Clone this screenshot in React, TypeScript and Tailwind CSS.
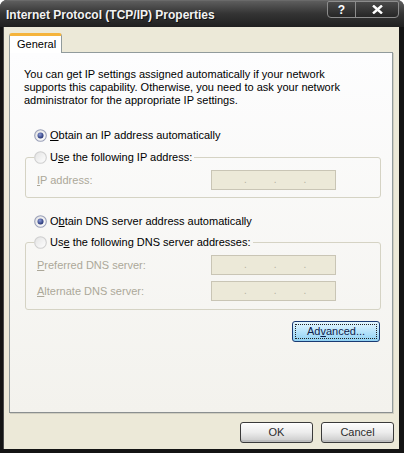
import React, { useId } from 'react';

const disabledText = 'text-[#ACA899]';

function Radio({ checked }: { checked?: boolean }) {
  const id = useId().replace(/:/g, '');
  return (
    <svg width="13" height="13" viewBox="0 0 13 13" className="shrink-0">
      <defs>
        <linearGradient id={`f${id}`} x1="0" y1="0" x2="1" y2="1">
          <stop offset="0" stopColor="#e2e2e2" />
          <stop offset="1" stopColor="#ffffff" />
        </linearGradient>
        <radialGradient id={`d${id}`} cx="0.4" cy="0.35" r="0.7">
          <stop offset="0" stopColor="#8a9ad8" />
          <stop offset="1" stopColor="#1c2a6a" />
        </radialGradient>
      </defs>
      <circle
        cx="6.5"
        cy="6.5"
        r="5.8"
        fill={`url(#f${id})`}
        stroke={checked ? '#9aa0b8' : '#cfcfcf'}
        strokeWidth="1.1"
      />
      {checked && <circle cx="6.5" cy="6.5" r="3" fill={`url(#d${id})`} />}
    </svg>
  );
}

function IpBox() {
  return (
    <div className="flex h-[20px] w-[125px] items-center gap-[27px] border border-[#C9C5B5] bg-[#ECE9D8] pb-[2px] pl-[32px] text-[10px] text-[#B5B1A2]">
      <span>.</span>
      <span>.</span>
      <span>.</span>
    </div>
  );
}

function FieldRow({ children }: { children: React.ReactNode }) {
  return (
    <div className="flex h-[20px] items-center pl-[11px]">
      <span className={`w-[174px] ${disabledText}`}>{children}</span>
      <IpBox />
    </div>
  );
}

function RadioRow({ checked, children }: { checked?: boolean; children: React.ReactNode }) {
  return (
    <div className="flex h-[16px] items-center gap-[3px] text-black">
      <Radio checked={checked} />
      <span className="pr-[2px]">{children}</span>
    </div>
  );
}

function XpButton({ children, focused }: { children: React.ReactNode; focused?: boolean }) {
  if (focused) {
    return (
      <button
        type="button"
        className="flex h-[21px] w-[88px] items-center justify-center rounded-[3px] border border-[#1a3a72] bg-gradient-to-b from-[#e4f6ff] via-[#b8e4fb] to-[#8fd0f2] p-[2px]"
      >
        <span className="flex h-full w-full items-center justify-center border border-dotted border-[#222] text-[#10204a]">
          {children}
        </span>
      </button>
    );
  }
  return (
    <button
      type="button"
      className="flex h-[21px] w-[73px] items-center justify-center rounded-[3px] border border-[#3a3a3a] bg-gradient-to-b from-[#fdfdfd] via-[#ececec] to-[#c9c9c9] text-[#2c2c2c] shadow-[inset_0_-2px_0_#bdbdbd,inset_0_1px_0_#ffffff]"
    >
      {children}
    </button>
  );
}

function TitleBar() {
  return (
    <div className="flex h-[27px] shrink-0 items-start justify-between rounded-t-[7px] border-t border-[#6a6a6a] bg-gradient-to-b from-[#5e5e5e] via-[#333333] to-[#202020]">
      <span className="pl-[6px] pt-[7px] font-['Liberation_Sans',Arial,sans-serif] text-[12px] font-bold leading-[14px] text-[#f2f2f2] [text-shadow:1px_1px_0_#111]">
        Internet Protocol (TCP/IP) Properties
      </span>
      <div className="mr-[5px] flex h-[17px] overflow-hidden rounded-b-[4px] rounded-t-[2px] border border-[#8c8c8c] bg-gradient-to-b from-[#4a4a4a] to-[#262626]">
        <div className="flex w-[28px] items-center justify-center border-r border-[#8c8c8c] text-[12px] font-bold leading-none text-white">
          ?
        </div>
        <div className="flex w-[42px] items-center justify-center">
          <svg width="11" height="9" viewBox="0 0 11 9">
            <path d="M1 0.5 L10 8.5 M10 0.5 L1 8.5" stroke="#fff" strokeWidth="2.4" />
          </svg>
        </div>
      </div>
    </div>
  );
}

export default function App() {
  return (
    <div className="h-[453px] w-[404px] bg-white font-['Liberation_Sans',Arial,sans-serif] text-[11px] leading-[13px]">
      <div className="flex h-full flex-col rounded-t-[7px] bg-[#141414]">
        <TitleBar />
        <div className="mb-[4px] ml-[3px] mr-[5px] flex flex-1 flex-col border-l border-[#4a4a4a] bg-[#ECE9D8] px-[5px] pt-[6px]">
          {/* tab strip */}
          <div className="relative z-10 -mb-px flex">
            <div className="flex h-[20px] w-[53px] items-center rounded-t-[3px] border-x border-[#919B9C] border-t-[3px] border-t-[#F5B43C] bg-white pl-[7px] text-black">
              General
            </div>
          </div>
          {/* tab panel */}
          <div className="flex h-[361px] w-[384px] flex-col border border-[#919B9C] border-b-[#8a8f90] bg-gradient-to-b from-[#FDFDFE] to-[#F3F2ED] shadow-[1px_1px_0_#d0cec0]">
            <p className="ml-[14px] mt-[15px] text-black">
              You can get IP settings assigned automatically if your network
              <br />
              supports this capability. Otherwise, you need to ask your network
              <br />
              administrator for the appropriate IP settings.
            </p>

            <div className="ml-[24px] mt-[20px]">
              <RadioRow checked>
                <u>O</u>btain an IP address automatically
              </RadioRow>
            </div>
            <fieldset className="ml-[15px] mt-[6px] w-[356px] rounded-[3px] border border-[#D5D3C4] p-0">
              <legend className="ml-[8px] p-0">
                <RadioRow>
                  U<u>s</u>e the following IP address:
                </RadioRow>
              </legend>
              <div className="mb-[7px] mt-[5px]">
                <FieldRow>
                  <u>I</u>P address:
                </FieldRow>
              </div>
            </fieldset>

            <div className="ml-[24px] mt-[15px]">
              <RadioRow checked>
                O<u>b</u>tain DNS server address automatically
              </RadioRow>
            </div>
            <fieldset className="ml-[15px] mt-[5px] w-[356px] rounded-[3px] border border-[#D5D3C4] p-0">
              <legend className="ml-[8px] p-0">
                <RadioRow>
                  Us<u>e</u> the following DNS server addresses:
                </RadioRow>
              </legend>
              <div className="mb-[8px] mt-[5px] flex flex-col gap-[6px]">
                <FieldRow>
                  <u>P</u>referred DNS server:
                </FieldRow>
                <FieldRow>
                  <u>A</u>lternate DNS server:
                </FieldRow>
              </div>
            </fieldset>

            <div className="mr-[12px] mt-[11px] flex justify-end">
              <XpButton focused>
                Ad<u>v</u>anced...
              </XpButton>
            </div>
          </div>

          <div className="mt-[9px] flex justify-end gap-[8px]">
            <XpButton>OK</XpButton>
            <XpButton>Cancel</XpButton>
          </div>
        </div>
      </div>
    </div>
  );
}
